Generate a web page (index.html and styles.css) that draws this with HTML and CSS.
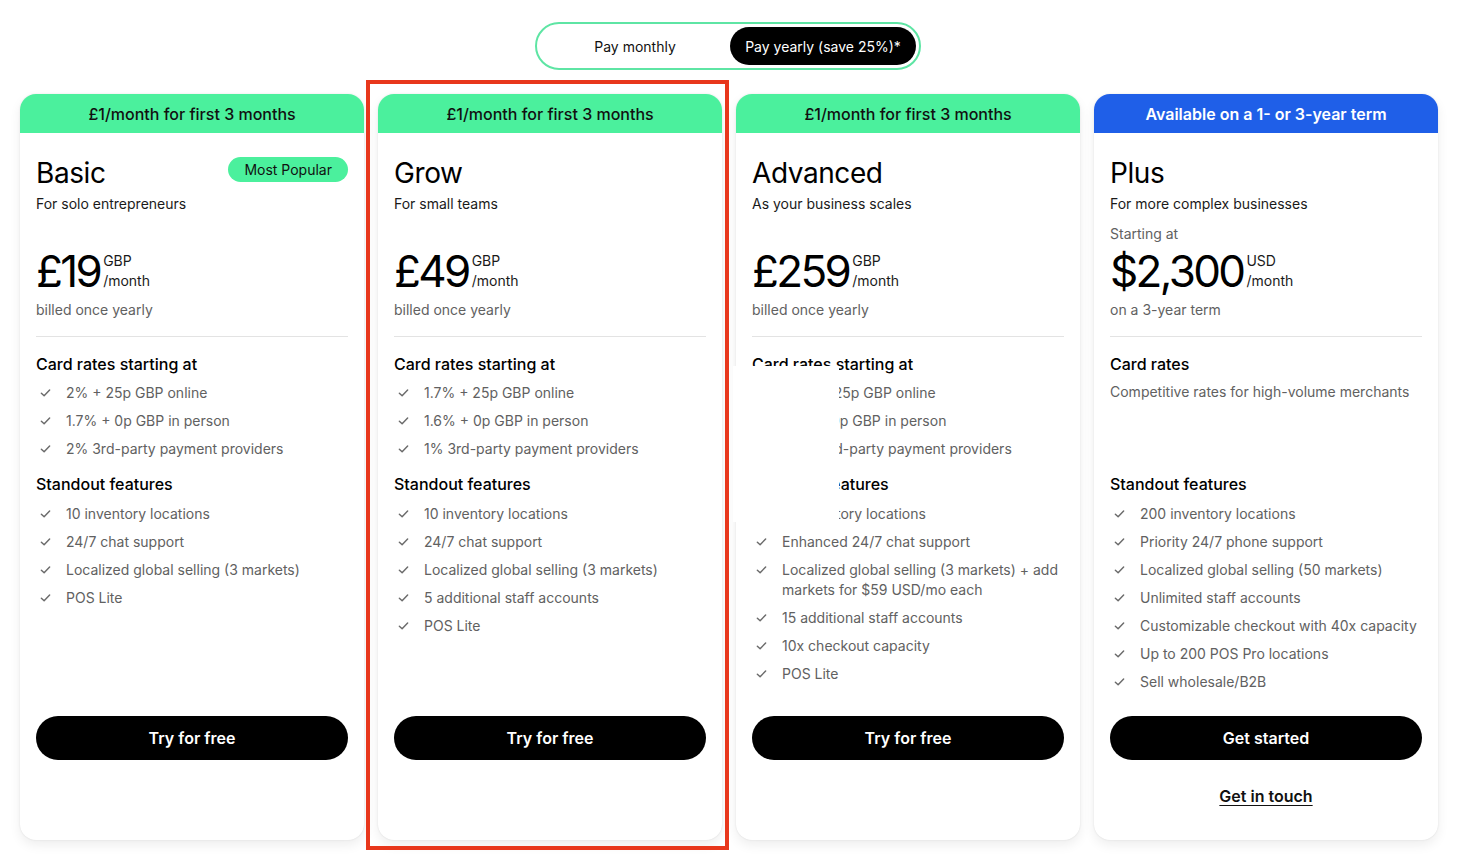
FILE: index.html
```html
<!DOCTYPE html>
<html lang="en">
<head>
<meta charset="utf-8">
<title>Pricing</title>
<link rel="stylesheet" href="styles.css">
</head>
<body>
<div class="page">
  <div class="toggle-wrap">
    <div class="toggle">
      <span class="toggle-opt">Pay monthly</span>
      <span class="toggle-opt active">Pay yearly (save 25%)*</span>
    </div>
  </div>

  <div class="cards">
    <!-- Basic -->
    <div class="card">
      <div class="card-head green">£1/month for first 3 months</div>
      <div class="card-body">
        <div class="title-row">
          <h2 class="plan">Basic</h2>
          <span class="badge">Most Popular</span>
        </div>
        <p class="sub">For solo entrepreneurs</p>
        <p class="starting"></p>
        <div class="price-row">
          <span class="price">£19</span>
          <span class="unit"><span>GBP</span><span>/month</span></span>
        </div>
        <p class="billed">billed once yearly</p>
        <hr class="divider">
        <div class="rates">
          <h3 class="sec">Card rates starting at</h3>
          <ul class="list">
            <li><svg class="chk" viewBox="0 0 12 10"><path d="M1.5 5.2 4.5 8 10.5 1.8"/></svg><span>2% + 25p GBP online</span></li>
            <li><svg class="chk" viewBox="0 0 12 10"><path d="M1.5 5.2 4.5 8 10.5 1.8"/></svg><span>1.7% + 0p GBP in person</span></li>
            <li><svg class="chk" viewBox="0 0 12 10"><path d="M1.5 5.2 4.5 8 10.5 1.8"/></svg><span>2% 3rd-party payment providers</span></li>
          </ul>
        </div>
        <div class="features">
          <h3 class="sec">Standout features</h3>
          <ul class="list">
            <li><svg class="chk" viewBox="0 0 12 10"><path d="M1.5 5.2 4.5 8 10.5 1.8"/></svg><span>10 inventory locations</span></li>
            <li><svg class="chk" viewBox="0 0 12 10"><path d="M1.5 5.2 4.5 8 10.5 1.8"/></svg><span>24/7 chat support</span></li>
            <li><svg class="chk" viewBox="0 0 12 10"><path d="M1.5 5.2 4.5 8 10.5 1.8"/></svg><span>Localized global selling (3 markets)</span></li>
            <li><svg class="chk" viewBox="0 0 12 10"><path d="M1.5 5.2 4.5 8 10.5 1.8"/></svg><span>POS Lite</span></li>
          </ul>
        </div>
        <div class="foot">
          <a class="btn">Try for free</a>
        </div>
      </div>
    </div>

    <!-- Grow -->
    <div class="card">
      <div class="card-head green">£1/month for first 3 months</div>
      <div class="card-body">
        <div class="title-row">
          <h2 class="plan">Grow</h2>
        </div>
        <p class="sub">For small teams</p>
        <p class="starting"></p>
        <div class="price-row">
          <span class="price">£49</span>
          <span class="unit"><span>GBP</span><span>/month</span></span>
        </div>
        <p class="billed">billed once yearly</p>
        <hr class="divider">
        <div class="rates">
          <h3 class="sec">Card rates starting at</h3>
          <ul class="list">
            <li><svg class="chk" viewBox="0 0 12 10"><path d="M1.5 5.2 4.5 8 10.5 1.8"/></svg><span>1.7% + 25p GBP online</span></li>
            <li><svg class="chk" viewBox="0 0 12 10"><path d="M1.5 5.2 4.5 8 10.5 1.8"/></svg><span>1.6% + 0p GBP in person</span></li>
            <li><svg class="chk" viewBox="0 0 12 10"><path d="M1.5 5.2 4.5 8 10.5 1.8"/></svg><span>1% 3rd-party payment providers</span></li>
          </ul>
        </div>
        <div class="features">
          <h3 class="sec">Standout features</h3>
          <ul class="list">
            <li><svg class="chk" viewBox="0 0 12 10"><path d="M1.5 5.2 4.5 8 10.5 1.8"/></svg><span>10 inventory locations</span></li>
            <li><svg class="chk" viewBox="0 0 12 10"><path d="M1.5 5.2 4.5 8 10.5 1.8"/></svg><span>24/7 chat support</span></li>
            <li><svg class="chk" viewBox="0 0 12 10"><path d="M1.5 5.2 4.5 8 10.5 1.8"/></svg><span>Localized global selling (3 markets)</span></li>
            <li><svg class="chk" viewBox="0 0 12 10"><path d="M1.5 5.2 4.5 8 10.5 1.8"/></svg><span>5 additional staff accounts</span></li>
            <li><svg class="chk" viewBox="0 0 12 10"><path d="M1.5 5.2 4.5 8 10.5 1.8"/></svg><span>POS Lite</span></li>
          </ul>
        </div>
        <div class="foot">
          <a class="btn">Try for free</a>
        </div>
      </div>
    </div>

    <!-- Advanced -->
    <div class="card">
      <div class="card-head green">£1/month for first 3 months</div>
      <div class="card-body">
        <div class="title-row">
          <h2 class="plan">Advanced</h2>
        </div>
        <p class="sub">As your business scales</p>
        <p class="starting"></p>
        <div class="price-row">
          <span class="price">£259</span>
          <span class="unit"><span>GBP</span><span>/month</span></span>
        </div>
        <p class="billed">billed once yearly</p>
        <hr class="divider">
        <div class="rates">
          <h3 class="sec">Card rates starting at</h3>
          <ul class="list">
            <li><svg class="chk" viewBox="0 0 12 10"><path d="M1.5 5.2 4.5 8 10.5 1.8"/></svg><span>0.6% + 25p GBP online</span></li>
            <li><svg class="chk" viewBox="0 0 12 10"><path d="M1.5 5.2 4.5 8 10.5 1.8"/></svg><span>1.5% + 0p GBP in person</span></li>
            <li><svg class="chk" viewBox="0 0 12 10"><path d="M1.5 5.2 4.5 8 10.5 1.8"/></svg><span>0.6% 3rd-party payment providers</span></li>
          </ul>
        </div>
        <div class="features">
          <h3 class="sec">Standout features</h3>
          <ul class="list">
            <li><svg class="chk" viewBox="0 0 12 10"><path d="M1.5 5.2 4.5 8 10.5 1.8"/></svg><span>10 inventory locations</span></li>
            <li><svg class="chk" viewBox="0 0 12 10"><path d="M1.5 5.2 4.5 8 10.5 1.8"/></svg><span>Enhanced 24/7 chat support</span></li>
            <li><svg class="chk" viewBox="0 0 12 10"><path d="M1.5 5.2 4.5 8 10.5 1.8"/></svg><span>Localized global selling (3 markets) + add markets for $59 USD/mo each</span></li>
            <li><svg class="chk" viewBox="0 0 12 10"><path d="M1.5 5.2 4.5 8 10.5 1.8"/></svg><span>15 additional staff accounts</span></li>
            <li><svg class="chk" viewBox="0 0 12 10"><path d="M1.5 5.2 4.5 8 10.5 1.8"/></svg><span>10x checkout capacity</span></li>
            <li><svg class="chk" viewBox="0 0 12 10"><path d="M1.5 5.2 4.5 8 10.5 1.8"/></svg><span>POS Lite</span></li>
          </ul>
        </div>
        <div class="foot">
          <a class="btn">Try for free</a>
        </div>
      </div>
    </div>

    <!-- Plus -->
    <div class="card">
      <div class="card-head blue">Available on a 1- or 3-year term</div>
      <div class="card-body">
        <div class="title-row">
          <h2 class="plan">Plus</h2>
        </div>
        <p class="sub">For more complex businesses</p>
        <p class="starting">Starting at</p>
        <div class="price-row">
          <span class="price">$2,300</span>
          <span class="unit"><span>USD</span><span>/month</span></span>
        </div>
        <p class="billed">on a 3-year term</p>
        <hr class="divider">
        <div class="rates">
          <h3 class="sec">Card rates</h3>
          <p class="note">Competitive rates for high-volume merchants</p>
        </div>
        <div class="features">
          <h3 class="sec">Standout features</h3>
          <ul class="list">
            <li><svg class="chk" viewBox="0 0 12 10"><path d="M1.5 5.2 4.5 8 10.5 1.8"/></svg><span>200 inventory locations</span></li>
            <li><svg class="chk" viewBox="0 0 12 10"><path d="M1.5 5.2 4.5 8 10.5 1.8"/></svg><span>Priority 24/7 phone support</span></li>
            <li><svg class="chk" viewBox="0 0 12 10"><path d="M1.5 5.2 4.5 8 10.5 1.8"/></svg><span>Localized global selling (50 markets)</span></li>
            <li><svg class="chk" viewBox="0 0 12 10"><path d="M1.5 5.2 4.5 8 10.5 1.8"/></svg><span>Unlimited staff accounts</span></li>
            <li><svg class="chk" viewBox="0 0 12 10"><path d="M1.5 5.2 4.5 8 10.5 1.8"/></svg><span>Customizable checkout with 40x capacity</span></li>
            <li><svg class="chk" viewBox="0 0 12 10"><path d="M1.5 5.2 4.5 8 10.5 1.8"/></svg><span>Up to 200 POS Pro locations</span></li>
            <li><svg class="chk" viewBox="0 0 12 10"><path d="M1.5 5.2 4.5 8 10.5 1.8"/></svg><span>Sell wholesale/B2B</span></li>
          </ul>
        </div>
        <div class="foot">
          <a class="btn">Get started</a>
          <a class="link">Get in touch</a>
        </div>
      </div>
    </div>
  </div>
</div>
<div class="glitch"></div>
<div class="highlight"></div>
</body>
</html>
```

FILE: styles.css
```css
* { box-sizing: border-box; }
html, body { margin: 0; padding: 0; background: #fff; }
body {
  position: relative;
  font-family: Inter, "Noto Sans", "Liberation Sans", sans-serif;
  color: #000;
  width: 1465px;
  height: 867px;
  overflow: hidden;
}
.page { padding: 22px 0 0 20px; }

.toggle-wrap { display: flex; padding-left: 515px; }
.toggle {
  display: flex;
  width: 386px;
  height: 48px;
  border: 2px solid #5ee5a4;
  border-radius: 24px;
  padding: 3px;
}
.toggle-opt {
  flex: 1;
  display: flex;
  align-items: center;
  justify-content: center;
  font-size: 14px;
  border-radius: 19px;
  color: #111;
}
.toggle-opt:first-child { flex: 0 0 190px; }
.toggle-opt.active { background: #000; color: #fff; }

.cards {
  display: flex;
  gap: 14px;
  margin-top: 24px;
  align-items: stretch;
}
.card {
  width: 344px;
  border-radius: 16px;
  background: #fff;
  box-shadow: 0 0 2px rgba(0,0,0,0.10), 0 5px 12px rgba(0,0,0,0.07);
  display: flex;
  flex-direction: column;
  overflow: hidden;
}
.card-head {
  height: 39px;
  display: flex;
  align-items: center;
  justify-content: center;
  font-size: 16px;
  font-weight: 500;
}
.card-head.green { background: #4bf09d; color: #111; }
.card-head.blue { background: #1f5fe8; color: #fff; font-weight: 600; }

.card-body {
  flex: 1;
  display: flex;
  flex-direction: column;
  padding: 23px 16px 32px 16px;
}
.title-row {
  display: flex;
  justify-content: space-between;
  align-items: flex-start;
  height: 34px;
}
.plan {
  margin: 0;
  font-size: 28px;
  font-weight: 400;
  line-height: 34px;
  letter-spacing: -0.015em;
}
.badge {
  margin-top: 1px;
  background: #4bf09d;
  border-radius: 13px;
  font-size: 14px;
  line-height: 25px;
  padding: 0 16px;
  color: #111;
}
.sub {
  margin: 4px 0 0 0;
  font-size: 14px;
  line-height: 20px;
  color: #1a1a1a;
}
.starting {
  margin: 10px 0 0 0;
  height: 20px;
  font-size: 14px;
  line-height: 20px;
  color: #616161;
}
.price-row {
  display: flex;
  align-items: flex-start;
  gap: 3px;
  margin-top: 5px;
  height: 45px;
}
.price {
  font-size: 44px;
  line-height: 44px;
  letter-spacing: -0.06em;
  font-weight: 400;
}
.unit {
  display: flex;
  flex-direction: column;
  font-size: 14px;
  line-height: 20px;
  padding-top: 2px;
  color: #1a1a1a;
}
.billed {
  margin: 6px 0 0 0;
  font-size: 14px;
  line-height: 20px;
  color: #616161;
}
.divider {
  margin: 16px 0 0 0;
  border: 0;
  border-top: 1px solid #e3e3e3;
  height: 0;
}
.rates {
  margin-top: 15px;
  min-height: 120px;
}
.sec {
  margin: 0;
  font-size: 16px;
  font-weight: 500;
  line-height: 24px;
}
.note {
  margin: 6px 0 0 0;
  font-size: 14px;
  line-height: 20px;
  color: #616161;
}
.list {
  list-style: none;
  margin: 7px 0 0 0;
  padding: 0;
  display: flex;
  flex-direction: column;
  gap: 8px;
}
.features .list { margin-top: 8px; }
.list li {
  display: flex;
  align-items: flex-start;
  font-size: 14px;
  line-height: 20px;
  color: #616161;
}
.chk {
  flex: 0 0 auto;
  width: 11px;
  height: 10px;
  margin: 5px 15px 0 4px;
  fill: none;
  stroke: #6b6b6b;
  stroke-width: 1.6;
  stroke-linecap: round;
  stroke-linejoin: round;
}
.features {
  flex: 1;
  padding-bottom: 24px;
}
.foot {
  min-height: 92px;
  display: flex;
  flex-direction: column;
  align-items: center;
}
.btn {
  width: 100%;
  height: 44px;
  border-radius: 22px;
  background: #000;
  color: #fff;
  display: flex;
  align-items: center;
  justify-content: center;
  font-size: 16px;
  font-weight: 600;
}
.link {
  margin-top: 24px;
  font-size: 16px;
  line-height: 24px;
  font-weight: 600;
  color: #111;
  text-decoration: underline;
  text-underline-offset: 3px;
}

.glitch {
  position: absolute;
  left: 733px;
  top: 366px;
  width: 106px;
  height: 156px;
  background: #fff;
}
.highlight {
  position: absolute;
  left: 366px;
  top: 80px;
  width: 363px;
  height: 770px;
  border: 4px solid #e8371c;
  pointer-events: none;
}
```
